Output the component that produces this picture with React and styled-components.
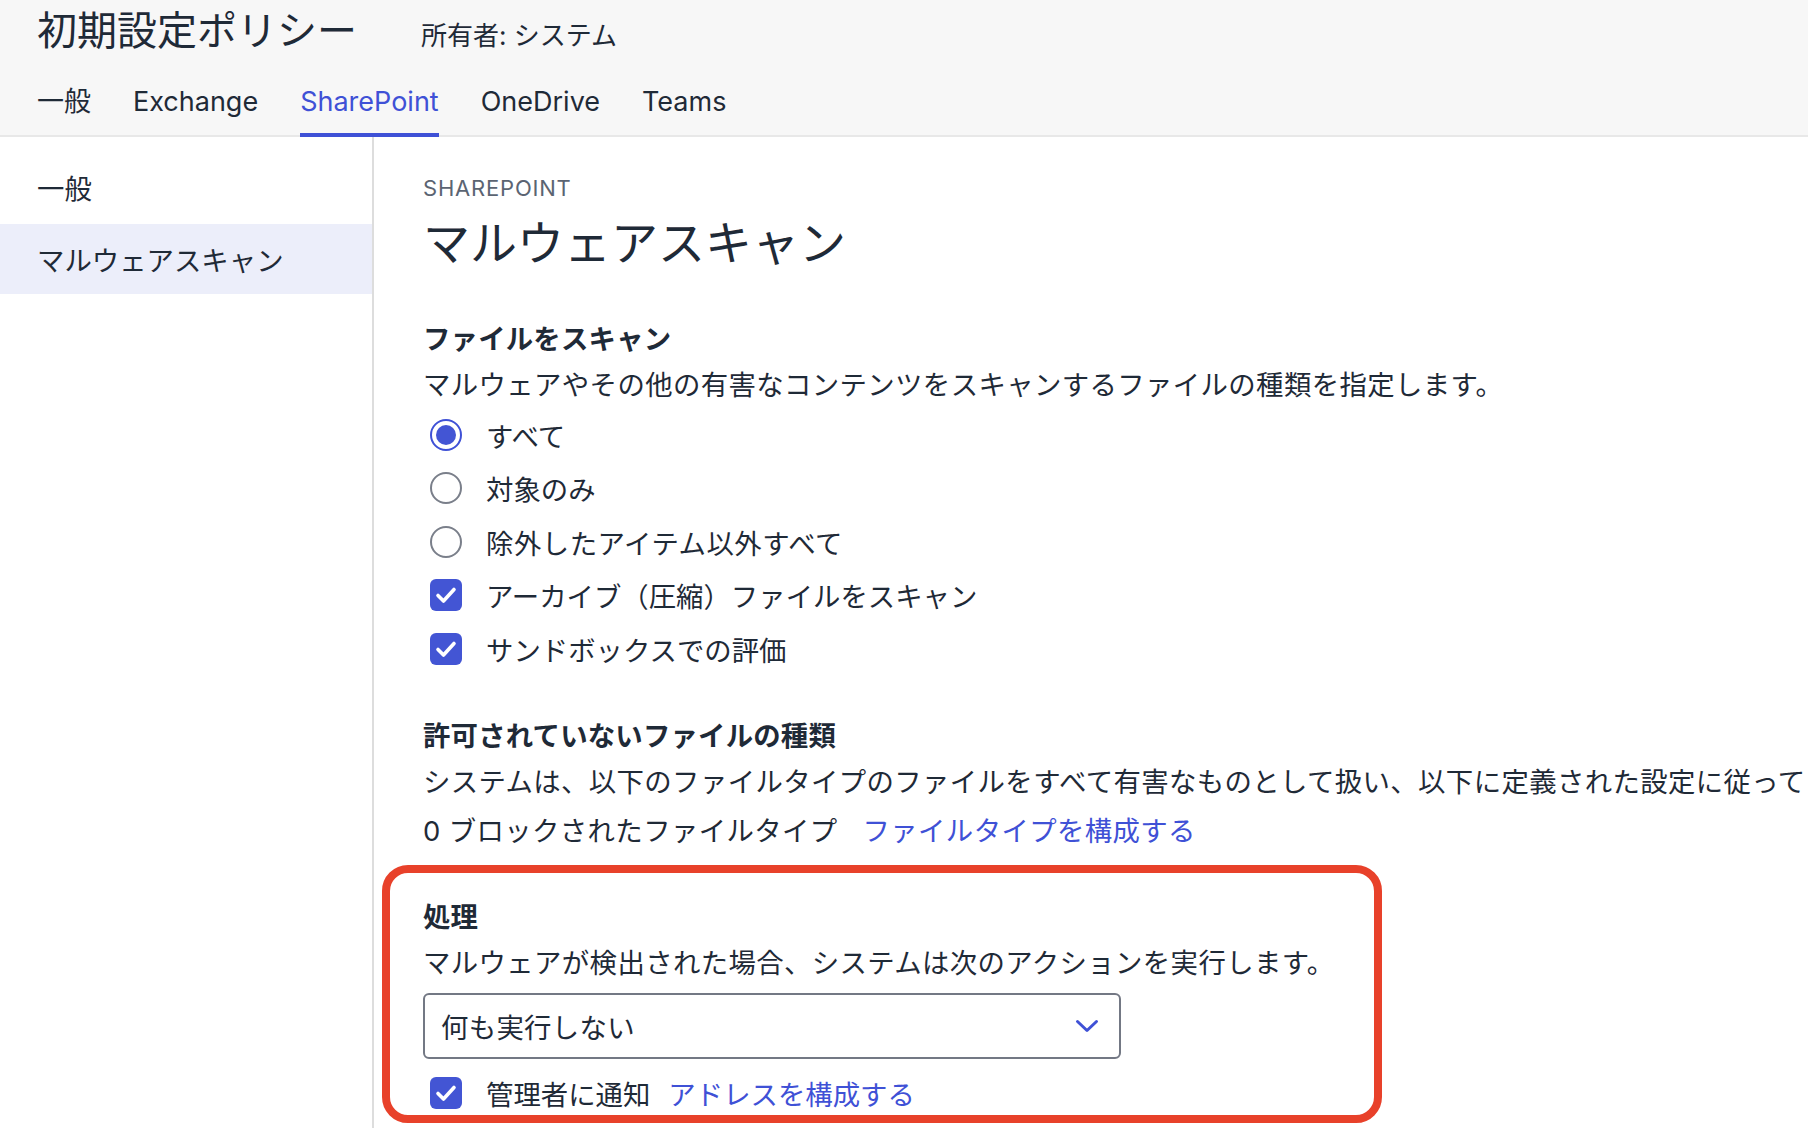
import styled, { createGlobalStyle } from 'styled-components';

const GlobalStyle = createGlobalStyle`
  html, body {
    margin: 0;
    padding: 0;
    background: #ffffff;
  }
  body {
    font-family: Inter, "Noto Sans CJK JP", sans-serif;
    color: #1f2937;
    overflow: hidden;
  }
  * {
    box-sizing: border-box;
  }
`;

const Page = styled.div`
  width: 1808px;
  height: 1128px;
  display: flex;
  flex-direction: column;
  overflow: hidden;
`;

const Header = styled.header`
  background: #f7f7f7;
  border-bottom: 2px solid #e8e8e8;
  padding: 5px 0 0 37px;
  display: flex;
  flex-direction: column;
  gap: 27px;
`;

const TitleRow = styled.div`
  display: flex;
  align-items: baseline;
  gap: 64px;
`;

const PolicyTitle = styled.h1`
  margin: 0;
  font-size: 40px;
  line-height: 52px;
  font-weight: 400;
  color: #1f2a37;
`;

const Owner = styled.span`
  font-size: 26px;
  color: #1f2a37;
`;

const Tabs = styled.nav`
  display: flex;
  gap: 42px;
`;

const Tab = styled.div`
  font-size: 27px;
  line-height: 36px;
  padding-bottom: 13px;
  margin-bottom: -2px;
  border-bottom: 4px solid ${(p) => (p.$active ? '#3f51d6' : 'transparent')};
  color: ${(p) => (p.$active ? '#3f51d6' : '#1f2a37')};
  cursor: pointer;
`;

const Body = styled.div`
  flex: 1;
  display: flex;
  min-height: 0;
`;

const Sidebar = styled.aside`
  width: 374px;
  flex-shrink: 0;
  border-right: 2px solid #dddddd;
  padding-top: 12px;
`;

const NavItem = styled.div`
  height: ${(p) => (p.$active ? 70 : 75)}px;
  display: flex;
  align-items: center;
  padding-left: 37px;
  font-size: 27.4px;
  color: #1f2a37;
  background: ${(p) => (p.$active ? '#eceefa' : 'transparent')};
`;

const Main = styled.main`
  flex: 1;
  min-width: 0;
  padding: 36px 0 0 49px;
  overflow: hidden;
  white-space: nowrap;
`;

const Eyebrow = styled.div`
  font-size: 22px;
  line-height: 30px;
  letter-spacing: 0.8px;
  color: #5b6472;
`;

const PageTitle = styled.h2`
  margin: 9px 0 0;
  font-size: 47px;
  line-height: 61px;
  font-weight: 400;
  color: #1f2a37;
`;

const Section = styled.section`
  margin-top: ${(p) => p.$top || 0}px;
`;

const SectionTitle = styled.h3`
  margin: 0;
  font-size: 27.4px;
  line-height: 46px;
  font-weight: 700;
  letter-spacing: 0.2px;
  color: #1f2a37;
`;

const Text = styled.div`
  margin-top: ${(p) => p.$top || 0}px;
  font-size: 27.4px;
  line-height: 46px;
  letter-spacing: 0.38px;
  color: #1f2a37;
`;

const Link = styled.a`
  color: #3f51d6;
  text-decoration: none;
  margin-left: ${(p) => p.$gap || 0}px;
  cursor: pointer;
`;

const Option = styled.label`
  height: ${(p) => p.$height || 53.5}px;
  display: flex;
  align-items: center;
  gap: 24px;
  padding-left: 7px;
  font-size: 27.4px;
  letter-spacing: ${(p) => p.$spacing || 0}px;
  color: #1f2a37;
  cursor: pointer;
`;

const Radio = styled.span`
  width: 32px;
  height: 32px;
  border-radius: 50%;
  border: 2px solid ${(p) => (p.$checked ? '#3f51d6' : '#7a7f8a')};
  display: flex;
  align-items: center;
  justify-content: center;
  flex-shrink: 0;

  &::after {
    content: '';
    width: 20px;
    height: 20px;
    border-radius: 50%;
    background: ${(p) => (p.$checked ? '#4355d4' : 'transparent')};
  }
`;

const Box = styled.span`
  width: 32px;
  height: 32px;
  border-radius: 6px;
  background: #4355d4;
  display: flex;
  align-items: center;
  justify-content: center;
  flex-shrink: 0;
`;

const Highlight = styled.section`
  width: 1000px;
  margin: 11px 0 0 -41px;
  border: 8px solid #e8412a;
  border-radius: 26px;
  padding: 21px 33px 0;
`;

const Select = styled.div`
  width: 698px;
  height: 66px;
  margin-top: 7px;
  border: 2px solid #737884;
  border-radius: 6px;
  display: flex;
  align-items: center;
  justify-content: space-between;
  padding: 0 20px 0 16px;
  font-size: 27.4px;
  letter-spacing: 0.3px;
  color: #1f2a37;
  background: #ffffff;
`;

const Notify = styled.div`
  margin-top: 12px;
`;

const Check = () => (
  <Box>
    <svg width="22" height="18" viewBox="0 0 22 18" fill="none">
      <path d="M3 9.5 L8.5 15 L19 3.5" stroke="#ffffff" strokeWidth="3.6" strokeLinecap="round" strokeLinejoin="round" />
    </svg>
  </Box>
);

const Chevron = () => (
  <svg width="24" height="14" viewBox="0 0 24 14" fill="none">
    <path d="M2.5 2.5 L12 11.5 L21.5 2.5" stroke="#3f51d6" strokeWidth="3" strokeLinecap="round" strokeLinejoin="round" />
  </svg>
);

const tabs = ['一般', 'Exchange', 'SharePoint', 'OneDrive', 'Teams'];

const scanOptions = [
  { type: 'radio', label: 'すべて', checked: true },
  { type: 'radio', label: '対象のみ', checked: false },
  { type: 'radio', label: '除外したアイテム以外すべて', checked: false, spacing: 0.5 },
  { type: 'check', label: 'アーカイブ（圧縮）ファイルをスキャン' },
  { type: 'check', label: 'サンドボックスでの評価' },
];

const App = () => {
  return (
    <>
      <GlobalStyle />
      <Page>
        <Header>
          <TitleRow>
            <PolicyTitle>初期設定ポリシー</PolicyTitle>
            <Owner>所有者: システム</Owner>
          </TitleRow>
          <Tabs>
            {tabs.map((t) => (
              <Tab key={t} $active={t === 'SharePoint'}>{t}</Tab>
            ))}
          </Tabs>
        </Header>
        <Body>
          <Sidebar>
            <NavItem>一般</NavItem>
            <NavItem $active>マルウェアスキャン</NavItem>
          </Sidebar>
          <Main>
            <Eyebrow>SHAREPOINT</Eyebrow>
            <PageTitle>マルウェアスキャン</PageTitle>

            <Section $top={43}>
              <SectionTitle>ファイルをスキャン</SectionTitle>
              <Text>マルウェアやその他の有害なコンテンツをスキャンするファイルの種類を指定します。</Text>
              {scanOptions.map((o) => (
                <Option key={o.label} $spacing={o.spacing}>
                  {o.type === 'radio' ? <Radio $checked={o.checked} /> : <Check />}
                  {o.label}
                </Option>
              ))}
            </Section>

            <Section $top={37}>
              <SectionTitle>許可されていないファイルの種類</SectionTitle>
              <Text>システムは、以下のファイルタイプのファイルをすべて有害なものとして扱い、以下に定義された設定に従って</Text>
              <Text $top={3}>
                0 ブロックされたファイルタイプ
                <Link $gap={25}>ファイルタイプを構成する</Link>
              </Text>
            </Section>

            <Highlight>
              <SectionTitle>処理</SectionTitle>
              <Text>マルウェアが検出された場合、システムは次のアクションを実行します。</Text>
              <Select>
                <span>何も実行しない</span>
                <Chevron />
              </Select>
              <Notify>
                <Option $height={44}>
                  <Check />
                  <span>
                    管理者に通知
                    <Link $gap={18}>アドレスを構成する</Link>
                  </span>
                </Option>
              </Notify>
            </Highlight>
          </Main>
        </Body>
      </Page>
    </>
  );
};

export default App;
